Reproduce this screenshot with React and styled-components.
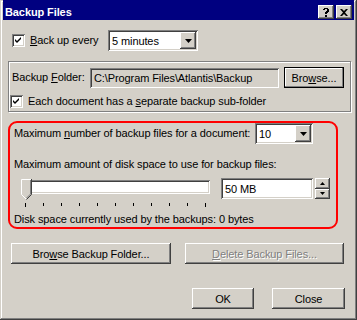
import React from "react";
import styled, { createGlobalStyle, css } from "styled-components";

const GlobalStyle = createGlobalStyle`
    body {
        margin: 0;
        background: #d4d0c8;
        font-family: "Liberation Sans", Arial, sans-serif;
        font-size: 11px;
        letter-spacing: -0.1px;
        color: #000;
    }
`

const raised = css`
    background-color: #d4d0c8;
    box-shadow: inset -1px -1px #404040, inset 1px 1px #ffffff,
        inset -2px -2px #808080, inset 2px 2px #d4d0c8;
`
const sunken = css`
    box-shadow: inset 1px 1px #808080, inset -1px -1px #ffffff,
        inset 2px 2px #404040, inset -2px -2px #d4d0c8;
`

function Check() {
    return (
        <CheckBox>
            <svg width="7" height="7" viewBox="0 0 7 7">
                <path d="M0 2 L2 4 L6 0 L6 2 L2 6 L0 4 Z" fill="#000" />
            </svg>
        </CheckBox>
    )
}

function Select({ value, width }) {
    return (
        <SelectBox width={width}>
            <SelectText>{value}</SelectText>
            <ArrowButton>
                <svg width="7" height="4" viewBox="0 0 7 4">
                    <path d="M0 0 H7 L3.5 4 Z" fill="#000" />
                </svg>
            </ArrowButton>
        </SelectBox>
    )
}

function Slider() {
    const ticks = Array.from({ length: 11 })
    return (
        <SliderWrap>
            <Track />
            <Thumb>
                <svg width="11" height="21" viewBox="0 0 11 21">
                    <path d="M0.5 0.5 H10.5 V15.5 L5.5 20.5 L0.5 15.5 Z" fill="#d4d0c8" />
                    <path d="M0.5 15.5 V0.5 H10" stroke="#fff" fill="none" />
                    <path d="M10.5 0 V15.5 L5.5 20.5" stroke="#404040" fill="none" />
                    <path d="M9.5 1 V15 L5.5 19" stroke="#808080" fill="none" />
                    <path d="M0.5 15.5 L5 20" stroke="#fff" fill="none" />
                </svg>
            </Thumb>
            <Ticks>
                {ticks.map((_, i) => (
                    <Tick key={i} long={i === 0 || i === ticks.length - 1} />
                ))}
            </Ticks>
        </SliderWrap>
    )
}

export default function App() {
    return (
        <>
            <GlobalStyle />
            <Window>
                <TitleBar>
                    <Title>Backup Files</Title>
                    <TitleButtons>
                        <TitleButton>
                            <svg width="6" height="9" viewBox="0 0 6 9">
                                <path d="M0 1 H1 V0 H5 V1 H6 V4 H5 V5 H4 V6 H2 V4 H3 V3 H4 V1 H2 V2 H0 Z M2 7 H4 V9 H2 Z" fill="#000" />
                            </svg>
                        </TitleButton>
                        <TitleButton>
                            <svg width="8" height="7" viewBox="0 0 8 7">
                                <path d="M0 0 H2 L4 2 L6 0 H8 L5 3.5 L8 7 H6 L4 5 L2 7 H0 L3 3.5 Z" fill="#000" />
                            </svg>
                        </TitleButton>
                    </TitleButtons>
                </TitleBar>
                <Body>
                    <Row indent="9px">
                        <Check />
                        <Label width="78px"><u>B</u>ack up every</Label>
                        <Select value="5 minutes" width="90px" />
                    </Row>
                    <GroupBox>
                        <Row>
                            <Label width="78px" first>Backup <u>F</u>older:</Label>
                            <Field>C:\Program Files\Atlantis\Backup</Field>
                            <Button width="60px" isDefault><span>Bro<u>w</u>se...</span></Button>
                        </Row>
                        <Row top="7px">
                            <Check />
                            <Label>Each document has a <u>s</u>eparate backup sub-folder</Label>
                        </Row>
                    </GroupBox>
                    <Highlight>
                        <Row>
                            <Label width="241px" first>Maximum <u>n</u>umber of backup files for a document:</Label>
                            <Select value="10" width="58px" />
                        </Row>
                        <Label first top="14px">Maximum amount of disk space to use for backup files:</Label>
                        <Row top="7px" align="flex-start">
                            <Slider />
                            <Field white width="92px">50 MB</Field>
                            <Spin>
                                <SpinButton>
                                    <svg width="5" height="3" viewBox="0 0 5 3"><path d="M2.5 0 L5 3 H0 Z" fill="#000" /></svg>
                                </SpinButton>
                                <SpinButton>
                                    <svg width="5" height="3" viewBox="0 0 5 3"><path d="M0 0 H5 L2.5 3 Z" fill="#000" /></svg>
                                </SpinButton>
                            </Spin>
                        </Row>
                        <Label first top="4px">Disk space currently used by the backups: 0 bytes</Label>
                    </Highlight>
                    <ButtonRow indent="8px" gap="14px" top="14px">
                        <Button width="160px">Bro<u>w</u>se Backup Folder...</Button>
                        <Button width="159px" disabled><u>D</u>elete Backup Files...</Button>
                    </ButtonRow>
                    <ButtonRow indent="189px" gap="18px" top="24px">
                        <Button width="62px">OK</Button>
                        <Button width="73px">Close</Button>
                    </ButtonRow>
                </Body>
            </Window>
        </>
    )
}

const Window = styled.div`
    width: 357px;
    height: 320px;
    box-sizing: border-box;
    padding: 0 3px 3px 3px;
    background-color: #d4d0c8;
    box-shadow: inset -1px -1px #404040, inset 1px 1px #d4d0c8,
        inset -2px -2px #808080, inset 2px 2px #ffffff;
    display: flex;
    flex-direction: column;
`
const TitleBar = styled.div`
    height: 20px;
    box-sizing: border-box;
    padding: 4px 2px 0 2px;
    background-color: #000080;
    display: flex;
    align-items: center;
    justify-content: space-between;
`
const Title = styled.span`
    color: #fff;
    font-weight: bold;
    font-size: 11px;
`
const TitleButtons = styled.div`
    display: flex;
    gap: 2px;
`
const TitleButton = styled.div`
    ${raised};
    width: 16px;
    height: 14px;
    display: flex;
    align-items: center;
    justify-content: center;
`
const Body = styled.div`
    flex: 1;
    padding-top: 10px;
    display: flex;
    flex-direction: column;
`
const Row = styled.div`
    display: flex;
    align-items: ${props => props.align || "center"};
    margin-left: ${props => props.indent || "0"};
    margin-top: ${props => props.top || "0"};
`
const CheckBox = styled.div`
    width: 13px;
    height: 13px;
    box-sizing: border-box;
    background: #fff;
    ${sunken};
    display: flex;
    align-items: center;
    justify-content: center;
    margin-right: 5px;
    flex-shrink: 0;
`
const Label = styled.div`
    width: ${props => props.width || "auto"};
    margin-top: ${props => props.top || "0"};
    line-height: 13px;
    white-space: nowrap;
    flex-shrink: 0;
    margin-left: ${props => props.first ? "2px" : "0"};
`
const SelectBox = styled.div`
    width: ${props => props.width};
    height: 21px;
    box-sizing: border-box;
    padding: 2px;
    background: #fff;
    ${sunken};
    display: flex;
    align-items: stretch;
`
const SelectText = styled.div`
    flex: 1;
    padding-left: 2px;
    display: flex;
    align-items: center;
    font-size: 11px;
`
const ArrowButton = styled.div`
    ${raised};
    width: 16px;
    display: flex;
    align-items: center;
    justify-content: center;
`
const GroupBox = styled.div`
    margin: 10px 0 0 5px;
    width: 343px;
    height: 51px;
    box-sizing: border-box;
    border: 1px solid #808080;
    box-shadow: inset 1px 1px #fff, 1px 1px #fff;
    padding: 5px 0 0 1px;
`
const Field = styled.div`
    width: ${props => props.width || "189px"};
    height: ${props => props.white ? "21px" : "20px"};
    box-sizing: border-box;
    padding: 0 4px;
    background: ${props => props.white ? "#fff" : "#d4d0c8"};
    ${sunken};
    display: flex;
    align-items: center;
    white-space: nowrap;
    overflow: hidden;
`
const Button = styled.div`
    ${raised};
    width: ${props => props.width};
    height: 21px;
    box-sizing: border-box;
    display: flex;
    align-items: center;
    justify-content: center;
    white-space: nowrap;
    margin-left: ${props => props.isDefault ? "5px" : "0"};
    ${props => props.isDefault && css`
        border: 1px solid #000;
        box-shadow: inset -1px -1px #808080, inset 1px 1px #ffffff;
    `}
    ${props => props.disabled && css`
        color: #808080;
        text-shadow: 1px 1px #fff;
    `}
`
const Highlight = styled.div`
    margin: 9px 0 0 5px;
    width: 330px;
    height: 108px;
    box-sizing: border-box;
    border: 2px solid #ff0000;
    border-radius: 9px;
    padding: 0 0 0 2px;
    display: flex;
    flex-direction: column;
`
const SliderWrap = styled.div`
    width: 200px;
    margin-left: 9px;
    display: flex;
    flex-direction: column;
    position: relative;
    padding-top: 2px;
`
const Track = styled.div`
    width: 189px;
    height: 14px;
    box-sizing: border-box;
    background: #fff;
    ${sunken};
`
const Thumb = styled.div`
    position: absolute;
    left: 0;
    top: 1px;
    line-height: 0;
`
const Ticks = styled.div`
    margin: 9px 0 0 4px;
    width: 181px;
    display: flex;
    justify-content: space-between;
    align-items: flex-start;
    height: 6px;
`
const Tick = styled.div`
    width: 1px;
    height: ${props => props.long ? "4px" : "3px"};
    background: #000;
`
const Spin = styled.div`
    margin-left: 2px;
    display: flex;
    flex-direction: column;
    height: 21px;
`
const SpinButton = styled.div`
    ${raised};
    width: 15px;
    flex: 1;
    display: flex;
    align-items: center;
    justify-content: center;
`
const ButtonRow = styled.div`
    display: flex;
    gap: ${props => props.gap};
    margin-left: ${props => props.indent};
    margin-top: ${props => props.top};
`
